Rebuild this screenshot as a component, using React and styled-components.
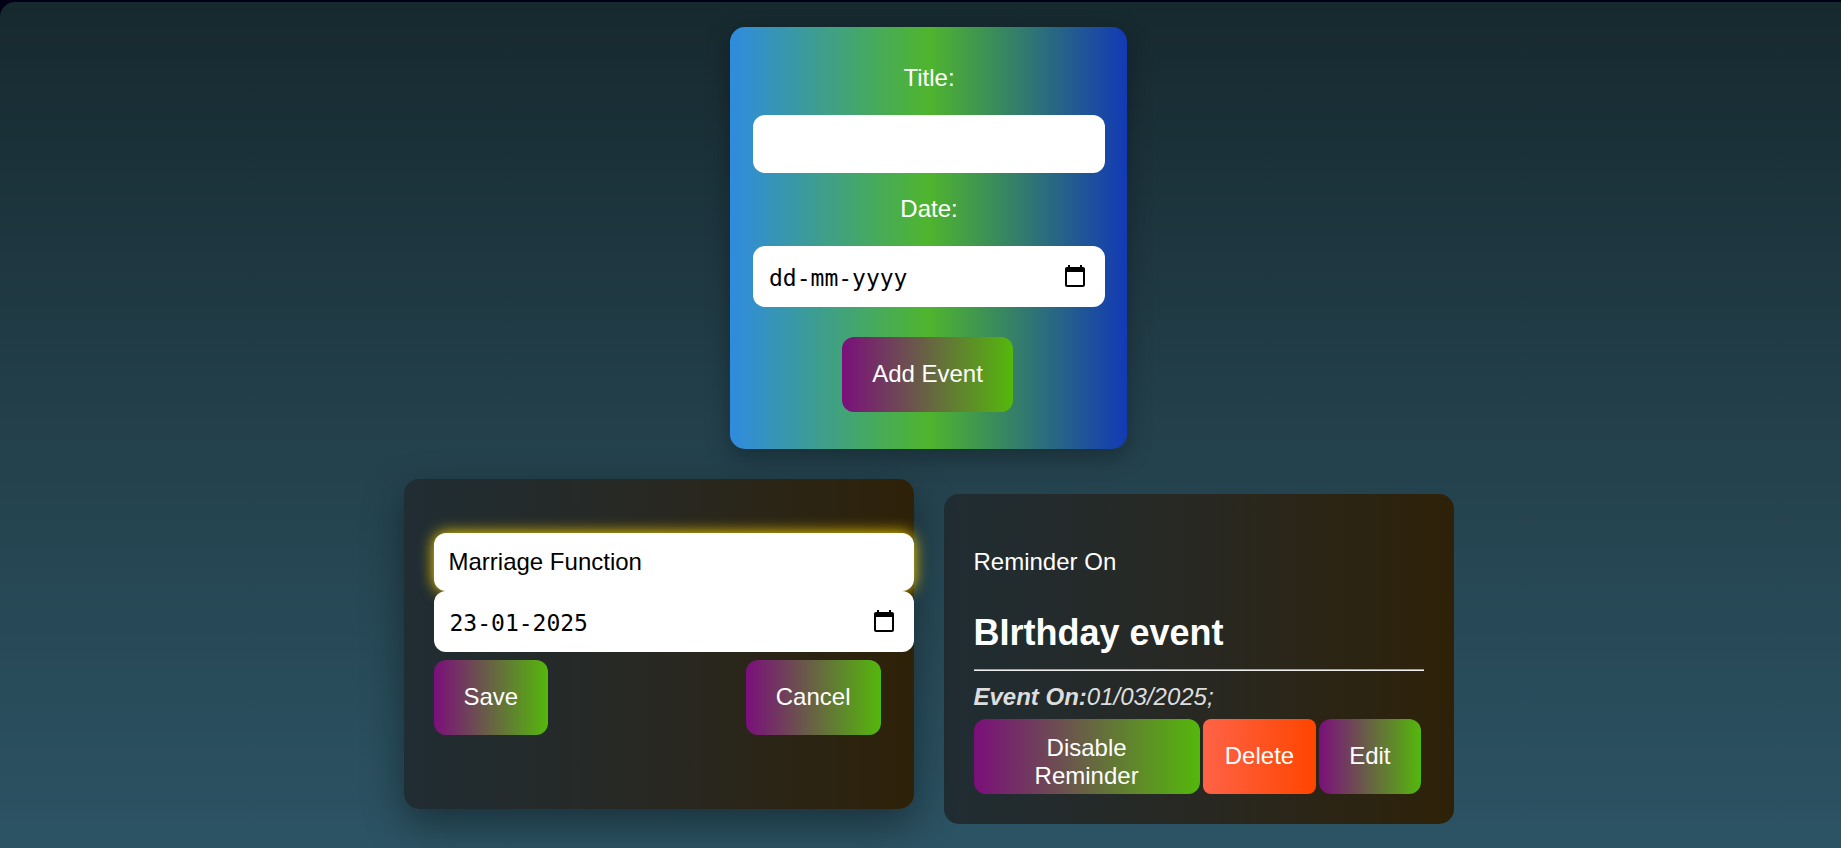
import React, { useState } from "react";
import styled, { createGlobalStyle, css } from "styled-components";

const GlobalStyle = createGlobalStyle`
  *, *::before, *::after { box-sizing: border-box; }
  body {
    margin: 0;
    background: #020014;
    color: #fff;
    font: 24px/27px "Liberation Sans", Arial, sans-serif;
  }
`;

const Page = styled.main`
  display: flex;
  flex-direction: column;
  align-items: center;
  gap: 45px;
  min-height: calc(100vh - 2px);
  margin-top: 2px;
  padding: 25px 0 24px 16px;
  border-top-left-radius: 15px;
  background: linear-gradient(to bottom, #16292f, #23404b 50%, #2c5364);
`;

const EventForm = styled.form`
  display: flex;
  flex-direction: column;
  width: 100%;
  max-width: 397px;
  padding: 37px 22px 37px 23px;
  border-radius: 15px;
  background: linear-gradient(to right, #2f8bdf, #4fb52d 50%, #123ab5);
  box-shadow: 0 8px 24px rgba(0, 0, 0, 0.3);
`;

const Label = styled.label`
  margin-bottom: 24px;
  text-align: center;
`;

const inputBase = css`
  width: 100%;
  border: 0;
  border-radius: 12px;
  outline: 0;
  background: #fff;
  color: #000;
`;

const TextInput = styled.input`
  ${inputBase}
  height: 58px;
  padding: 0 15px;
  font: 24px "Liberation Sans", Arial, sans-serif;
  box-shadow: ${(p) => (p.$glow ? "0 0 15px gold" : "none")};
`;

const DateBox = styled.div`
  display: flex;
  align-items: center;
  height: 61px;
  padding-right: 18px;
  border-radius: 12px;
  background: #fff;
  position: relative;
`;

const DateText = styled.input`
  ${inputBase}
  flex: 1;
  min-width: 0;
  padding: 2px 16px 0;
  font: 23px Consolas, "DejaVu Sans Mono", monospace;
  &::placeholder { color: #000; opacity: 1; }
`;

const PickerButton = styled.button`
  display: flex;
  padding: 0 0 2px;
  border: 0;
  background: none;
  color: #000;
`;

const Button = styled.button`
  height: 75px;
  margin: 0 3px 0 0;
  padding: 15px ${(p) => (p.$danger ? 22 : 30)}px 17px;
  border: 0;
  border-radius: ${(p) => (p.$danger ? 8 : 12)}px;
  background: ${(p) =>
    p.$danger
      ? "linear-gradient(to right, tomato, orangered)"
      : "linear-gradient(to right, #7b0f7b, #54b80b)"};
  color: #fff;
  font: 24px/28px "Liberation Sans", Arial, sans-serif;
  cursor: pointer;
`;

const SubmitRow = styled.div`
  display: flex;
  justify-content: center;
  margin-top: 30px;
`;

const Spacer = styled.div`
  height: 22px;
`;

const EventList = styled.section`
  display: flex;
  flex-wrap: wrap;
  justify-content: center;
  gap: 30px;
`;

const EventCard = styled.article`
  width: 510px;
  max-width: 100%;
  min-height: 330px;
  padding: 30px;
  border-radius: 15px;
  background: linear-gradient(to right, #202d33, #282822 50%, #2e2108);
  ${(p) =>
    p.$raised &&
    css`
      transform: translateY(-15px);
      box-shadow: 0 15px 40px rgba(0, 0, 0, 0.4);
    `}
`;

const EditForm = styled.form`
  display: flex;
  flex-direction: column;
  margin-top: 24px;
`;

const EditFields = styled.div`
  margin-right: -30px;
`;

const Actions = styled.div`
  display: flex;
  justify-content: space-between;
  margin-top: ${(p) => (p.$editing ? 8 : 9)}px;
`;

const Status = styled.p`
  margin: 24px 0 37px;
`;

const EventTitle = styled.h3`
  margin: 0;
  font-size: 36px;
  line-height: 41px;
`;

const Divider = styled.hr`
  height: 2px;
  margin: 16px 0 12px;
  border: 0;
  border-top: 1px solid #9f9f9a;
  background: #eee;
`;

const EventDate = styled.p`
  margin: 0;
  color: #ddd;
  font-style: italic;
`;

function DateField({ id, label, ...props }) {
  return (
    <DateBox>
      <DateText id={id} type="text" placeholder="dd-mm-yyyy" aria-label={label} {...props} />
      <PickerButton type="button" aria-label="Show date picker">
        <svg width="24" height="24" viewBox="0 0 24 24" fill="currentColor" aria-hidden="true">
          <path d="M20 3h-1V1h-2v2H7V1H5v2H4c-1.1 0-2 .9-2 2v16c0 1.1.9 2 2 2h16c1.1 0 2-.9 2-2V5c0-1.1-.9-2-2-2zm0 18H4V8h16v13z" />
        </svg>
      </PickerButton>
    </DateBox>
  );
}

export default function App() {
  const [title, setTitle] = useState("");
  const [draft, setDraft] = useState("Marriage Function");
  const stop = (e) => e.preventDefault();

  return (
    <>
      <GlobalStyle />
      <Page>
        <EventForm onSubmit={stop}>
          <Label htmlFor="title">Title:</Label>
          <TextInput id="title" value={title} onChange={(e) => setTitle(e.target.value)} />
          <Spacer />
          <Label htmlFor="date">Date:</Label>
          <DateField id="date" />
          <SubmitRow>
            <Button type="submit">Add Event</Button>
          </SubmitRow>
        </EventForm>

        <EventList>
          <EventCard $raised>
            <EditForm onSubmit={stop}>
              <EditFields>
                <TextInput
                  $glow
                  aria-label="Event title"
                  value={draft}
                  onChange={(e) => setDraft(e.target.value)}
                />
                <DateField label="Event date" defaultValue="23-01-2025" />
              </EditFields>
              <Actions $editing>
                <Button type="submit">Save</Button>
                <Button type="button">Cancel</Button>
              </Actions>
            </EditForm>
          </EventCard>

          <EventCard>
            <Status>Reminder On</Status>
            <EventTitle>BIrthday event</EventTitle>
            <Divider />
            <EventDate>
              <strong>Event On:</strong>01/03/2025;
            </EventDate>
            <Actions>
              <Button type="button">Disable Reminder</Button>
              <Button type="button" $danger>Delete</Button>
              <Button type="button">Edit</Button>
            </Actions>
          </EventCard>
        </EventList>
      </Page>
    </>
  );
}
